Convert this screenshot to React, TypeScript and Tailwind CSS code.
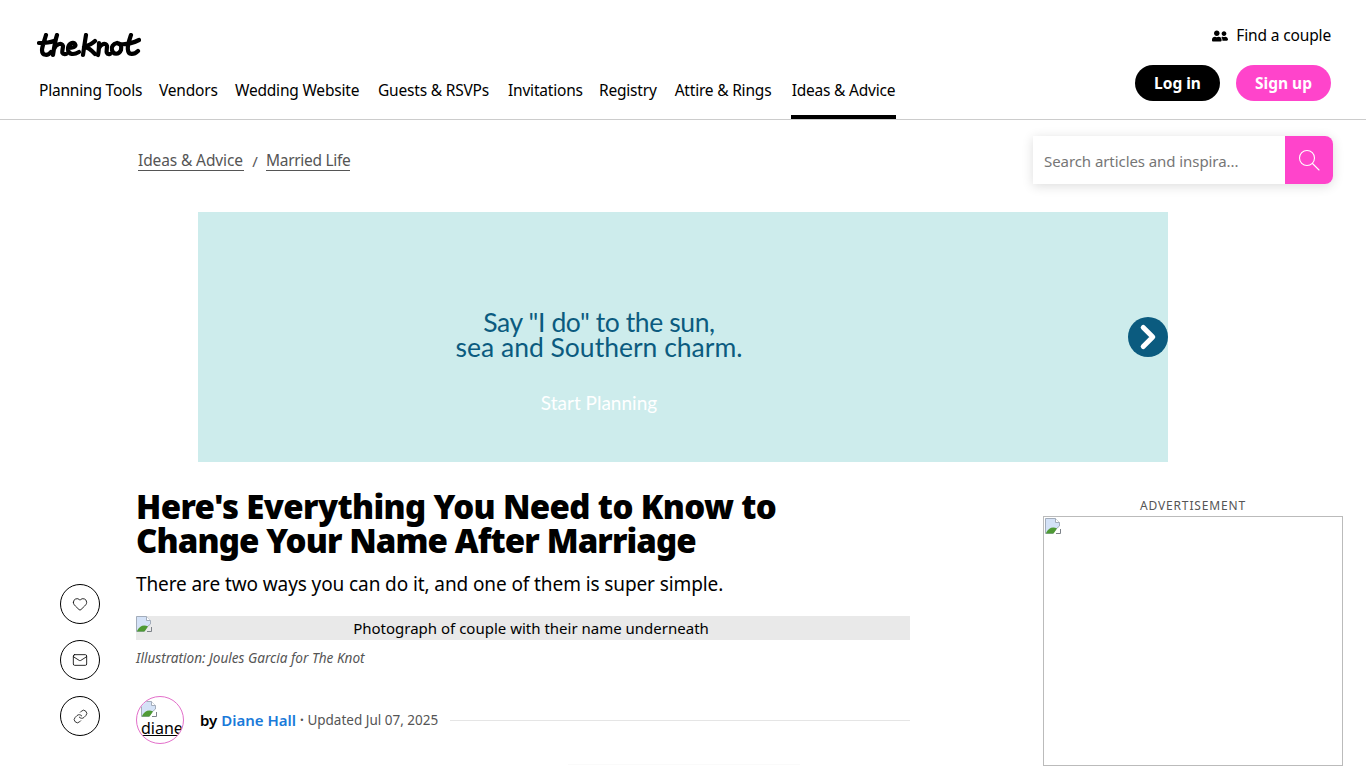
import React from 'react';
import { Heart, Mail, Link, ChevronRight } from 'lucide-react';
import { FaUserFriends } from 'react-icons/fa';

const navItems = [
  { label: 'Planning Tools', width: 'w-[102px]' },
  { label: 'Vendors', width: 'w-[58px]' },
  { label: 'Wedding Website', width: 'w-[124px]' },
  { label: 'Guests & RSVPs', width: 'w-[113px]' },
  { label: 'Invitations', width: 'w-[73px]' },
  { label: 'Registry', width: 'w-[56px]' },
  { label: 'Attire & Rings', width: 'w-[100px]' },
  { label: 'Ideas & Advice', width: 'w-[105px]' },
];

const Logo = () => (
  <svg width="104" height="25" viewBox="0 0 104 25" fill="none" stroke="#000" strokeWidth="4.2" strokeLinecap="round" strokeLinejoin="round">
    <path d="M2 10C7 10 12 10 17 8M9 2C7 9 5 14 5 17C5 23 11 23 14 19" />
    <path d="M20 2C18 8 17 15 16 22M17 16C19 11 25 9 26 13C26 17 23 22 29 21" />
    <path d="M31 15C35 15 40 14 38 11C36 8 31 11 31 16C31 22 37 22 42 19" />
    <path d="M49 2C48 8 47 15 46 22M58 8C55 11 50 13 47 14C51 14 54 17 58 21" />
    <path d="M62 10C62 14 62 18 61 22M62 15C64 11 69 9 70 13C70 17 68 22 73 21" />
    <path d="M80 10C76 11 74 14 75 17C76 22 82 22 84 17C85 13 83 10 80 10" />
    <path d="M82 11C89 12 96 10 102 7M94 2C92 8 90 13 91 17C91 22 97 22 101 18" />
  </svg>
);

const BrokenImage = () => (
  <svg width="16" height="16" viewBox="0 0 16 16" className="shrink-0">
    <path d="M0.5 0.5H10.5L14.5 4.5V8L11 11L8 15.5H0.5Z" fill="#d4e2f7" stroke="#a3adbb" strokeWidth="1" />
    <path d="M1 15C3 10 8 8 12 10.5L8.5 15.5H1Z" fill="#4f9a35" />
    <path d="M10.5 0.5V4.5H14.5" fill="#ffffff" stroke="#a3adbb" strokeWidth="1" />
    <path d="M15.5 11V15.5H11" fill="none" stroke="#7d8289" strokeWidth="1" />
  </svg>
);

const ShareButton = ({ children }: { children: React.ReactNode }) => (
  <button className="w-10 h-10 rounded-full border border-black bg-white flex items-center justify-center">{children}</button>
);

export default function App() {
  return (
    <div className="h-[768px] overflow-hidden bg-white text-black font-['Noto_Sans',sans-serif]">
      <header className="h-[120px] border-b border-[#cccccc] flex justify-between">
        <div className="pl-[37px]">
          <div className="pt-[33px] h-[71px]">
            <Logo />
          </div>
          <nav className="flex gap-[18px] pl-[2px] h-[48px] text-[15.5px] tracking-[-0.2px]">
            {navItems.map(item => (
              <a key={item.label} className={`${item.width} h-[48px] pt-[9px] leading-[21px] whitespace-nowrap text-center ${item.label === 'Ideas & Advice' ? 'border-b-4 border-black' : ''}`}>
                {item.label}
              </a>
            ))}
          </nav>
        </div>
        <div className="pr-[35px] flex flex-col items-end">
          <div className="mt-[26px] h-[20px] flex items-center gap-[8px] text-[15.5px] tracking-[-0.15px]">
            <FaUserFriends size={16} />
            Find a couple
          </div>
          <div className="mt-[19px] flex gap-4">
            <button className="w-[85px] h-9 pt-px rounded-full bg-black text-white text-[15.5px] font-bold">Log in</button>
            <button className="w-[95px] h-9 pt-px rounded-full bg-[#ff44cb] text-white text-[15.5px] font-bold">Sign up</button>
          </div>
        </div>
      </header>

      <div className="h-[92px] pl-[138px] pr-[33px] pt-4 flex justify-between">
        <div className="flex items-center h-[48px] text-[15.5px] text-[#555555]">
          <a className="w-[106px] border-b border-[#555555] leading-[19px] mt-[2px] whitespace-nowrap tracking-[-0.12px]">Ideas &amp; Advice</a>
          <span className="w-[22px] text-center text-[15px] mt-[3px]">/</span>
          <a className="w-[84px] border-b border-[#555555] leading-[19px] mt-[2px] whitespace-nowrap tracking-[-0.3px]">Married Life</a>
        </div>
        <div className="w-[300px] h-[48px] flex rounded-r-lg shadow-[0_2px_12px_rgba(0,0,0,0.14)]">
          <div className="flex-1 bg-white pl-[11px] pt-[2px] flex items-center text-[15px] tracking-[-0.07px] text-[#767676]">Search articles and inspira...</div>
          <div className="w-12 bg-[#ff44cb] rounded-r-lg flex items-center justify-center">
            <svg width="24" height="24" viewBox="0 0 24 24" fill="none" stroke="#ffffff" strokeWidth="1.1" strokeLinecap="round">
              <circle cx="10" cy="10" r="7.5" />
              <path d="M15.5 15.5L22 22" />
            </svg>
          </div>
        </div>
      </div>

      <div className="ml-[198px] w-[970px] h-[250px] bg-[#cdecec] flex items-center justify-between">
        <div className="w-[802px] pt-[50px] text-center font-['Lato',sans-serif]">
          <div className="text-[26.5px] leading-[25px] text-[#0b5b7f]">
            <span className="tracking-[-0.4px]">Say "I do" to the sun,</span>
            <br />
            sea and Southern charm.
          </div>
          <div className="mt-[31px] text-[19px] leading-[24px] text-white">Start Planning</div>
        </div>
        <div className="w-10 h-10 rounded-full bg-[#0b5b7f] flex items-center justify-center">
          <ChevronRight size={38} strokeWidth={3.2} className="text-white" />
        </div>
      </div>

      <div className="flex pl-[60px]">
        <div className="w-10 pt-[122px] flex flex-col gap-4">
          <ShareButton><Heart size={16} strokeWidth={1.25} /></ShareButton>
          <ShareButton><Mail size={16} strokeWidth={1.25} /></ShareButton>
          <ShareButton><Link size={15} strokeWidth={1.25} /></ShareButton>
        </div>

        <main className="ml-9 w-[774px] pt-[28px]">
          <h1 className="text-[33px] leading-[34px] font-black">
            <span className="block tracking-[-0.64px]">Here's Everything You Need to Know to</span>
            <span className="block tracking-[-0.89px]">Change Your Name After Marriage</span>
          </h1>
          <p className="mt-[12px] text-[19px] leading-[28px] tracking-[-0.1px]">There are two ways you can do it, and one of them is super simple.</p>
          <div className="mt-[18px] h-6 bg-[#e9e9e9] flex text-[15px] leading-6">
            <BrokenImage />
            <span className="flex-1 text-center">Photograph of couple with their name underneath</span>
          </div>
          <p className="mt-[9px] text-[13.6px] leading-[18px] italic text-[#555555]">Illustration: Joules Garcia for The Knot</p>
          <div className="mt-[29px] flex items-center">
            <div className="w-12 h-12 rounded-full border border-[#e36fca] overflow-hidden pl-[4px] pt-[4px] text-[16px] leading-[22px] whitespace-nowrap shrink-0">
              <BrokenImage />
              <span className="underline">diane</span>
            </div>
            <span className="ml-4 text-[15px] font-semibold">by <span className="text-[#1a7ad9]">Diane Hall</span></span>
            <span className="ml-[4px] text-[13.5px] text-[#555555]"><span className="font-bold">·</span> Updated Jul 07, 2025</span>
            <div className="ml-3 flex-1 h-px bg-[#e5e5e5]" />
          </div>
          <div className="mt-5 ml-[432px] w-[232px] h-px bg-[#fafafa]" />
        </main>

        <aside className="ml-[133px] w-[300px] pt-[36px]">
          <div className="text-center text-[12px] leading-[16px] tracking-[0.85px] text-[#555555]">ADVERTISEMENT</div>
          <div className="mt-[2px] h-[250px] border border-[#bbbbbb] pl-px pt-px">
            <BrokenImage />
          </div>
        </aside>
      </div>
    </div>
  );
}
